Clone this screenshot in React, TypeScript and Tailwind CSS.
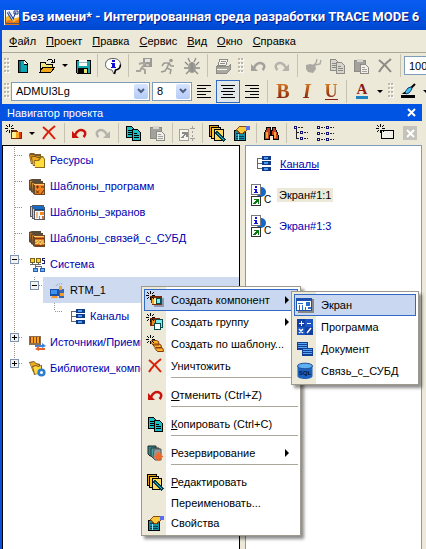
import type { ReactNode } from 'react';
import { clsx } from 'clsx';

interface IconProps {
  children: ReactNode;
  size?: number;
  smooth?: boolean;
}

function Icon({ children, size = 18, smooth }: IconProps) {
  return (
    <svg
      width={size}
      height={size}
      viewBox={`0 0 ${size} ${size}`}
      fill="none"
      shapeRendering={smooth ? 'auto' : 'crispEdges'}
      className="shrink-0"
      aria-hidden="true"
    >
      {children}
    </svg>
  );
}

function Spark() {
  return (
    <path
      d="M4 0h1v3H4zM4 6h1v3H4zM0 4h3v1H0zM6 4h3v1H6zM1 1h1v1H1zM2 2h1v1H2zM7 1h1v1H7zM6 2h1v1H6zM1 7h1v1H1zM2 6h1v1H2zM7 7h1v1H7zM6 6h1v1H6z"
      fill="#000"
    />
  );
}

const LogoIcon = () => (
  <Icon size={17} smooth>
    <path d="M1 1h15v15H1z" fill="#f4f6fb" />
    <path d="M2 9l4-3 3 4 7-2v8H2z" fill="#fbb52c" />
    <path d="M2 13l4-2 5 2 5-3v6H2z" fill="#e8751a" />
    <path d="M2.500 1v13.500H16" stroke="#4b5568" />
    <path d="M5 3l5 8" stroke="#2c4a9c" strokeWidth="3" />
    <path d="M5 3l5 8" stroke="#c9dcf8" />
    <path d="M10 10l3-7M11 2h4v3h-4z" stroke="#1c3a8c" />
  </Icon>
);

const NewIcon = () => (
  <Icon>
    <path d="M4 3h6l4 4v9H4z" fill="#000" />
    <path d="M5 4h5v4h3v7H5z" fill="#0fa5b0" />
    <path d="M5 4h2v11H5z" fill="#0b6b83" />
    <path d="M10 4v3h3z" fill="#fff" />
  </Icon>
);

const OpenIcon = () => (
  <Icon>
    <path d="M2 14V5h5l1 2h6v3" fill="#f6e27a" stroke="#000" />
    <path d="M2 15l3-5h12l-4 5z" fill="#f0a51c" stroke="#000" />
    <path d="M9 4c2-3 5-2 6 1M13 5h3V2" stroke="#000" />
  </Icon>
);

const SaveIcon = () => (
  <Icon>
    <path d="M3 3h14v13H4l-1-1z" fill="#12aab0" stroke="#000" />
    <path d="M6 3h8v6H6z" fill="#fff" />
    <path d="M6 5h8v1H6z" fill="#9ab8c0" />
    <path d="M5 11h10v5H5z" fill="#000" />
    <path d="M11 12h3v4h-3z" fill="#f0e070" />
  </Icon>
);

const InfoIcon = () => (
  <Icon smooth>
    <path d="M9 1.500c5 0 7.500 2.600 7.500 6 0 3-2 5-5 5.500L10 17l-2-4c-4-.5-6.500-2-6.500-5.500 0-3.400 2.500-6 7.500-6z" fill="#fff" stroke="#555" />
    <path d="M10.500 17l1-4c3-.5 5-2.500 5-5.500" stroke="#000" strokeWidth="1.500" />
    <path d="M8 3h3v2H8zM7 6h4v4h1v1H7v-1h1V7H7z" fill="#1010d0" />
  </Icon>
);

const RunSaveIcon = () => (
  <Icon>
    <path d="M8 1h9v9H8z" fill="#9c9a94" />
    <path d="M10 2h5v3h-5z" fill="#e6e4dc" />
    <path d="M11 7h3v2h-3z" fill="#c9c7be" />
    <path d="M4 7l3-1h3l-3 5 3 2v4M7 10l-2 4H1" stroke="#a8a69f" strokeWidth="2" shapeRendering="auto" />
  </Icon>
);

const RunIcon = () => (
  <Icon smooth>
    <circle cx="12" cy="3.500" r="1.800" fill="#9c9a94" />
    <path d="M5 6h5l-2 5 4 2-1 4M8 11l-2 3-4 1M10 6l2 3h3M5 6L3 9" stroke="#9c9a94" strokeWidth="1.500" />
  </Icon>
);

const BugIcon = () => (
  <Icon smooth>
    <ellipse cx="9" cy="10.500" rx="4" ry="5.500" fill="#9c9a94" />
    <path d="M9 5v10M5 8L2 5M13 8l3-3M5 11H1M13 11h4M6 14l-3 3M12 14l3 3M7 5L5 1M11 5l2-4" stroke="#8d8b85" strokeWidth="1.300" />
  </Icon>
);

const PrinterIcon = () => (
  <Icon>
    <path d="M6 2h8l-2 6H4z" fill="#f4f3ee" stroke="#8d8b85" />
    <path d="M7 4h5M6 6h5" stroke="#8d8b85" />
    <path d="M2 9h13l1-1v5l-3 3H2z" fill="#a9a7a0" stroke="#8d8b85" />
    <path d="M3 12h10" stroke="#f4f3ee" />
  </Icon>
);

const UndoIcon = ({ color = '#a3a19b' }: { color?: string }) => (
  <Icon smooth>
    <path d="M5 11c2-5 6-6 9-4 2 1.500 1.500 4-.5 6" stroke={color} strokeWidth="2.500" />
    <path d="M2 7v7h7z" fill={color} />
  </Icon>
);

const RedoIcon = () => (
  <Icon smooth>
    <path d="M13 11C11 6 7 5 4 7c-2 1.500-1.500 4 .5 6" stroke="#b4b2ab" strokeWidth="2.500" />
    <path d="M16 7v7H9z" fill="#b4b2ab" />
  </Icon>
);

const CutIcon = () => (
  <Icon smooth>
    <path d="M2 8l4-1 5 1 1 4-3 4-5-1-2-3z" fill="#aaa8a1" />
    <path d="M9 9l3-3 1-4M11 8l5-1 1-4" stroke="#aaa8a1" strokeWidth="1.300" />
  </Icon>
);

const CopyIcon = ({ active }: { active?: boolean }) => {
  const fill = active ? '#19bfc4' : '#d6d4cb';
  const line = active ? '#000' : '#8d8b85';
  return (
    <Icon>
      <path d="M2.500 2.500h5l3 3v8h-8z" fill={fill} stroke={line} />
      <path d="M4 6h4M4 8h4M4 10h4" stroke={line} />
      <path d="M8.500 5.500h5l3 3v8h-8z" fill={fill} stroke={line} />
      <path d="M10 9h3M10 11h5M10 13h5" stroke={line} />
    </Icon>
  );
};

const PasteIcon = () => (
  <Icon>
    <path d="M2.500 3.500h11v11h-11z" fill="#a3a19b" stroke="#8d8b85" />
    <path d="M5 2h6v3H5z" fill="#d6d4cb" />
    <path d="M8.500 7.500h5l3 3v6h-8z" fill="#f1efe7" stroke="#8d8b85" />
    <path d="M10 10h3M10 12h5M10 14h5" stroke="#a3a19b" />
  </Icon>
);

const CrossIcon = ({ color = '#8d8b85' }: { color?: string }) => (
  <Icon smooth>
    <path d="M3 3c4 3 8 7 12 12" stroke={color} strokeWidth="2" />
    <path d="M15 2C10 6 6 10 3 15" stroke={color} strokeWidth="2" />
  </Icon>
);

type AlignKind = 'left' | 'center' | 'right';

const alignPaths: Record<AlignKind, string> = {
  left: 'M2 3.500h14M2 6.500h9M2 9.500h14M2 12.500h9M2 15.500h14',
  center: 'M2 3.500h14M4 6.500h10M2 9.500h14M4 12.500h10M2 15.500h14',
  right: 'M2 3.500h14M7 6.500h9M2 9.500h14M7 12.500h9M2 15.500h14',
};

const AlignIcon = ({ kind }: { kind: AlignKind }) => (
  <Icon>
    <path d={alignPaths[kind]} stroke="#000" />
  </Icon>
);

const BrushIcon = () => (
  <Icon size={16} smooth>
    <path d="M15 1L8 8" stroke="#000" strokeWidth="2" />
    <path d="M11 4L8 5 5 9l1 2 3-1 3-4z" fill="#3cc0e8" stroke="#123a7a" />
    <path d="M5 9c-2 0-2 2-4 2h5z" fill="#000" />
    <path d="M1 12h14v3H1z" fill="#000" />
  </Icon>
);

const CreateIcon = () => (
  <Icon>
    <path d="M6 6h6l1 2h4v7H6z" fill="#7a2a08" />
    <path d="M7 8h9v6H7z" fill="#f7a822" />
    <path d="M7 8h4v6H7z" fill="#fff08c" />
    <path d="M14 8h2v6h-2z" fill="#e0341c" />
    <Spark />
  </Icon>
);

const ShortcutIcon = () => (
  <Icon>
    <path d="M1.500 5.500h9v11h-9z" fill="#f6f5f0" stroke="#a3a19b" />
    <path d="M4 14l4-5M4 8.500h4.500V13" stroke="#8d8b85" strokeWidth="2" />
    <path d="M14.500 2v3M14.500 7v2M14.500 11v2M14.500 15v2M12 4.500h5M12 14.500h5" stroke="#a3a19b" />
  </Icon>
);

const EditIcon = () => (
  <Icon>
    <path d="M1.500 1.500h9v11h-9z" fill="#e39a14" stroke="#000" />
    <path d="M3.500 3.500h9v11h-9z" fill="#f7c93c" stroke="#000" />
    <path d="M6.500 5.500h9v11h-9z" fill="#fbd75c" stroke="#000" />
    <path d="M8 8l9 9" stroke="#063f4c" strokeWidth="3" />
    <path d="M9 9l7 7" stroke="#25c4d4" />
  </Icon>
);

const PropsIcon = () => (
  <Icon>
    <path d="M2.500 6.500h11v10h-11z" fill="#148fa6" stroke="#000" />
    <path d="M4 9.500h8M4 12.500h8M4 14.500h8" stroke="#053b55" />
    <path d="M6.500 10v6" stroke="#8be4ee" />
    <path d="M4 6l4-4h6v5l-3 2H8z" fill="#f7c93c" stroke="#8b4b0d" />
    <path d="M14 2h4v4h-4z" fill="#5a6cf0" />
  </Icon>
);

const FindIcon = () => (
  <Icon>
    <path d="M5 3h3v3h2V3h3l3 8v4h-5v-4H7v4H2v-4z" fill="#c8411a" stroke="#000" />
    <path d="M4 8h2v6H4zM12 8h2v6h-2z" fill="#f7a23a" />
    <path d="M8 6h2v5H8z" fill="#000" />
  </Icon>
);

const TreeViewIcon = () => (
  <Icon>
    <path d="M4.500 5v10M5 8.500h2M5 14.500h2" stroke="#222" />
    <path d="M2.500 2.500h2v2h-2zM8.500 7.500h2v2h-2zM8.500 13.500h2v2h-2z" fill="#fff" stroke="#10107a" />
    <path d="M6 3.500h5M12 8.500h4M12 14.500h4" stroke="#222" strokeDasharray="2 1" />
  </Icon>
);

const ListViewIcon = () => (
  <Icon>
    <path
      d="M1.500 2.500h2v2h-2zM1.500 8.500h2v2h-2zM1.500 14.500h2v2h-2zM10.500 2.500h2v2h-2zM10.500 8.500h2v2h-2zM10.500 14.500h2v2h-2z"
      fill="#fff"
      stroke="#10107a"
    />
    <path d="M5 3.500h4M5 9.500h4M5 15.500h4M14 3.500h4M14 9.500h4M14 15.500h4" stroke="#222" strokeDasharray="2 1" />
  </Icon>
);

const NewWindowIcon = () => (
  <Icon>
    <path d="M5.500 6.500h12v8h-12z" fill="#f1efe7" stroke="#000" />
    <Spark />
  </Icon>
);

const FoldersIcon = () => (
  <Icon size={17} smooth>
    <path d="M0 3l1-2h4l1 1h6v10H2z" fill="#7a5a28" />
    <path d="M1 3h4l1 1h5v7H2z" fill="#d98a10" />
    <path d="M2 5l1-1h4l1 1h6v9H4z" fill="#7a5a28" />
    <path d="M3 5h4l1 1h5v7H4z" fill="#f0a81e" />
    <path d="M5 8h4l3-4h2l2 3v9H6z" fill="#8a6a20" />
    <path d="M6 9h4l3-4 2 2v8H6z" fill="#ffdc3a" />
  </Icon>
);

const StackBase = ({ side, front }: { side: string; front: string }) => (
  <>
    <path d="M0 2l3-1h9v12H2l-2-1z" fill="#5a4a38" />
    <path d="M1 3h10v8H2z" fill={side} />
    <path d="M2 4l2-1h10v12H4l-2-1z" fill="#5a4a38" />
    <path d="M3 5h10v9H4z" fill={side} />
    <path d="M4 6l2-1h10v12H6l-2-1z" fill="#6a4a28" />
    <path d="M6 7h9v9H6z" fill={front} />
    <path d="M5 6h10v1H5z" fill="#ffc870" />
  </>
);

const ProgramsIcon = () => (
  <Icon size={17} smooth>
    <StackBase side="#e5982c" front="#f58220" />
    <path d="M7 9h3M8.500 7.500v3M12 9h3M7 12.500l3 3M10 12.500l-3 3M15 12l-3 4" stroke="#5c2a08" />
  </Icon>
);

const ScreensIcon = () => (
  <Icon size={17}>
    <path d="M1 2h2V1h12v2h1v13H5v-1H3v-2H1z" fill="#55585e" />
    <path d="M2 3h1v9H2zM4 5h1v9H4z" fill="#c9ccd2" />
    <path d="M3 2h12v3H4V3H3z" fill="#1a6cc0" />
    <path d="M6 7h9v8H6z" fill="#f4f6f9" />
    <path d="M6 5h10v1H6z" fill="#0d4788" />
    <path d="M7 8h2v6H7z" fill="#e8b68c" />
    <path d="M11 8h4v3h-4z" fill="#f08a1e" />
    <path d="M10 12h1v3h-1zM13 12h2v3h-2z" fill="#c97a40" />
  </Icon>
);

const DatabaseStackIcon = () => (
  <Icon size={17} smooth>
    <StackBase side="#cf7a24" front="#d8701c" />
    <path d="M6 8.500h9M6 15.500h9" stroke="#8a3a08" />
    <text x="6" y="14" className="font-bold text-[5px]" fill="#fff27a">SQL</text>
  </Icon>
);

const SystemIcon = () => (
  <Icon size={17}>
    <path d="M1 2h5v5H1zM7 2h5v5H7z" fill="#7a6420" />
    <path d="M2 3h3v3H2zM8 3h3v3H8z" fill="#ffd622" />
    <path d="M3.500 7v2M9.500 7v2M1 8.500h11M6.500 9v3M12.500 10v2M6 10.500h7" stroke="#6a6a6a" />
    <path d="M4 12h5v4H4zM11 12h5v4h-5z" fill="#2c5ca8" />
    <path d="M5 13h3v2H5zM12 13h3v2h-3z" fill="#6ab4fa" />
    <path d="M16 2.500h-2.500v2h2v3H13" stroke="#1a1a70" />
  </Icon>
);

const NodeIcon = () => (
  <Icon size={17} smooth>
    <path d="M1 7h9v7H1z" fill="#1a50a8" />
    <path d="M2 8h6v4H2z" fill="#3f92f0" />
    <path d="M2 16h7l-1-2H3z" fill="#f29a2c" />
    <path d="M10 7h5v9h-5z" fill="#3763b4" />
    <path d="M10 4h3v4h-3z" fill="#e2a43c" />
    <path d="M11 11h4v3h-4z" fill="#f29a2c" />
    <path d="M7 4c1-3 4-1 7-3" stroke="#999" strokeDasharray="1 1" />
  </Icon>
);

const ChannelsIcon = () => (
  <Icon size={17}>
    <path d="M7 3.500H2.500v10H7M3 8.500h4" stroke="#666" />
    <path d="M7 1h9v4H7zM7 6h9v4H7zM7 12h9v4H7z" fill="#123a84" />
    <path d="M9 2h4v2H9zM9 7h4v2H9zM9 13h4v2H9z" fill="#4a9cf5" />
  </Icon>
);

const SourcesIcon = () => (
  <Icon size={17} smooth>
    <path d="M0 2h12v9H0z" fill="#8a7050" />
    <path d="M1 3h10v6H1z" fill="#8a3c0c" />
    <path d="M3 3v6M6 3v6M9 3v6" stroke="#f7a11e" strokeWidth="2" />
    <path d="M6 11h7V9l4 3-4 2v-1H6z" fill="#3a82e0" />
    <path d="M16 14h-6v-2l-4 3 4 2v-1h6z" fill="#e8642c" />
  </Icon>
);

const LibrariesIcon = () => (
  <Icon size={17} smooth>
    <path d="M0 2l5-1 2 2 4 1v6l-7 2z" fill="#7a5a28" />
    <path d="M1 3l4-1 2 2 3 1v5l-6 1z" fill="#f0ac1e" />
    <path d="M3 6l4-1 2 1 4-1v8l-8 2z" fill="#7a5a28" />
    <path d="M4 7l3-1 2 1 3-1v7l-6 1z" fill="#ffd93a" />
    <circle cx="12.500" cy="12.500" r="2.800" fill="#fff" stroke="#2c7cd0" strokeWidth="2.600" />
  </Icon>
);

const CallIcon = () => (
  <svg width="22" height="24" viewBox="0 0 22 24" fill="none" shapeRendering="crispEdges" className="shrink-0" aria-hidden="true">
    <circle cx="11" cy="9" r="5" fill="#1666c8" shapeRendering="auto" />
    <path d="M1.500 1.500h9v10h-9z" fill="#fff" stroke="#777" />
    <path d="M5 3h2v2H5zM4 6h3v3h1v1H4V9h1V7H4z" fill="#1010d8" />
    <path d="M1.500 13.500h9v9h-9z" fill="#fff" stroke="#333" />
    <path d="M4 16h5v5H8v-2H7v1H6v1H3v-1h1v-1h1v-1h1v-1H4z" fill="#087a12" />
    <text x="14" y="20" className="text-[10px]" fill="#000">C</text>
  </svg>
);

const CreateComponentIcon = () => (
  <Icon>
    <path d="M8 7h10v9H8z" fill="#8c98b0" />
    <path d="M4 5h12v9H6z" fill="#7a2a08" />
    <path d="M6 7h5v6H6z" fill="#f7a822" />
    <path d="M8 7h2v6H8z" fill="#fff0a8" />
    <path d="M10.500 7.500h4v5h-4z" fill="#7cecea" stroke="#064b50" />
    <Spark />
  </Icon>
);

const CreateGroupIcon = () => (
  <Icon>
    <path d="M4 5h10v8H4z" fill="#7a2a08" />
    <path d="M6 7h7v5H6z" fill="#f08a1c" />
    <path d="M9.500 6.500h7v8h-7z" fill="#7cecea" stroke="#064b50" />
    <path d="M8.500 10.500h6v6h-6z" fill="#fff" stroke="#064b50" />
    <Spark />
  </Icon>
);

const CreateFromTemplateIcon = () => (
  <Icon smooth>
    <path
      d="M4.500 6.500l1-1h5l2 1 .5 3.500h-6zM7 10l1-1h5l2 1 .5 3h-6zM9 13.500l1-1h5l2 1 .5 3h-6z"
      fill="#fbb42c"
      stroke="#8a3a0c"
    />
    <Spark />
  </Icon>
);

const ReserveIcon = () => (
  <Icon smooth>
    <path d="M2 2h8v10H4l-2-2z" fill="#2c8a90" stroke="#222" />
    <path d="M5 4h8v10H7l-2-2z" fill="#4aa0a4" stroke="#333" />
    <path d="M8 5h7v11H9l-2-2z" fill="#8f9b9c" stroke="#555" />
    <path d="M12.500 8v9M8 12.500h9M9.500 9.500l6 6M15.500 9.500l-6 6" stroke="#f0682a" strokeWidth="1.500" />
  </Icon>
);

const ScreenIcon = () => (
  <Icon>
    <path d="M2 3h16v14H2z" fill="#888" />
    <path d="M0 2h16v13H0z" fill="#1c4fae" />
    <path d="M1 5h14v9H1z" fill="#fff" />
    <path d="M2 7h5v1H2zM3 9h1v5H3zM6 9h1v5H6zM10 6h4v4h-4zM9 11h1v3H9zM12 11h3v2h-3z" fill="#2b6bd0" />
  </Icon>
);

const ProgramIcon = () => (
  <Icon>
    <path d="M1 1h16v16H1z" fill="#123fa4" />
    <path d="M9 1h8v8H9zM1 9h8v8H1z" fill="#1a55c4" />
    <path d="M3 5.500h5M5.500 3v5M11 5.500h4" stroke="#fff" />
    <path d="M3 11l4 4M7 11l-4 4M15 10l-4 5" stroke="#fff" strokeWidth="1.500" shapeRendering="auto" />
  </Icon>
);

const DocumentIcon = () => (
  <Icon>
    <path d="M1 2h11v8H1zM6 8h11v8H6z" fill="#123f94" />
    <path d="M2 3h9v1H2zM2 5h9v1H2zM2 7h9v1H2zM7 9h9v1H7zM7 11h9v1H7zM7 13h9v1H7z" fill="#5aa6f4" />
  </Icon>
);

const DatabaseIcon = () => (
  <Icon smooth>
    <path d="M1.500 4v10c0 4 15 4 15 0V4z" fill="#1d62bc" />
    <ellipse cx="9" cy="4" rx="7.500" ry="2.800" fill="#61aef2" stroke="#1d4f9a" />
    <text x="3" y="13" className="font-bold text-[6px]" fill="#06122e">SQL</text>
  </Icon>
);

function Tool({ label, active, children }: { label: string; active?: boolean; children: ReactNode }) {
  return (
    <button
      type="button"
      aria-label={label}
      className={clsx(
        'flex h-[23px] w-6 shrink-0 items-center justify-center',
        active && 'border border-[#316ac5] bg-[#e1e6e8]',
      )}
    >
      {children}
    </button>
  );
}

function Arrow({ label }: { label: string }) {
  return (
    <button type="button" aria-label={label} className="flex h-6 w-[11px] shrink-0 items-center justify-center">
      <span className="border-x-[3px] border-t-[3px] border-x-transparent border-t-black" />
    </button>
  );
}

const Divider = () => (
  <div className="flex h-[23px] w-[7px] shrink-0 justify-center">
    <div className="w-px bg-[#c5c2b2]" />
  </div>
);

const NavDivider = () => (
  <div className="flex h-5 w-[6px] shrink-0 justify-center">
    <div className="w-px bg-[#c5c2b2]" />
  </div>
);

function Grip({ wide }: { wide?: boolean }) {
  return (
    <div className={clsx('flex shrink-0 justify-center', wide ? 'w-[11px]' : 'w-2')}>
      <svg width="6" height="18" viewBox="0 0 6 18" fill="none" shapeRendering="crispEdges" aria-hidden="true">
        <path d="M2 2v16M5 2v16" stroke="#fff" strokeWidth="2" strokeDasharray="2 2" />
        <path d="M1 1v16M4 1v16" stroke="#bbb8aa" strokeWidth="2" strokeDasharray="2 2" />
      </svg>
    </div>
  );
}

function Combo({ label, value, className }: { label: string; value: string; className: string }) {
  return (
    <div className={clsx('relative h-[19px] shrink-0', className)}>
      <select
        aria-label={label}
        className="h-full w-full appearance-none border border-[#7f9db9] bg-white pl-1 text-[11px] leading-4 outline-none"
      >
        <option>{value}</option>
      </select>
      <span className="pointer-events-none absolute inset-y-[2px] right-[2px] flex w-[14px] items-center justify-center rounded-xs bg-linear-to-b from-[#d7e4fd] to-[#b4cbf7]">
        <svg width="8" height="6" viewBox="0 0 8 6" fill="none" aria-hidden="true">
          <path d="M1 1l3 3 3-3" stroke="#4d6185" strokeWidth="2" />
        </svg>
      </span>
    </div>
  );
}

const menuItems = [
  ['Ф', 'айл'],
  ['П', 'роект'],
  ['П', 'равка'],
  ['С', 'ервис'],
  ['В', 'ид'],
  ['О', 'кно'],
  ['С', 'правка'],
];

type GuideKind = 'branch' | 'plus' | 'minus' | 'line' | 'end' | 'minusEnd' | 'plusEnd' | 'blank';

function Guide({ kind }: { kind: GuideKind }) {
  const box = kind.startsWith('plus') || kind.startsWith('minus');
  const ends = kind === 'end' || kind.endsWith('End');
  return (
    <svg width="20" height="26" viewBox="0 0 20 26" fill="none" shapeRendering="crispEdges" className="shrink-0" aria-hidden="true">
      {kind !== 'blank' && (
        <path d={ends ? 'M11.500 0v8' : 'M11.500 0v26'} stroke="#9a978a" strokeDasharray="1 1" />
      )}
      {kind !== 'line' && kind !== 'blank' && <path d="M12 8.500h8" stroke="#9a978a" strokeDasharray="1 1" />}
      {box && (
        <>
          <path d="M7.500 4.500h8v8h-8z" fill="#f3f2ec" stroke="#7f93b0" />
          <path d={kind.startsWith('plus') ? 'M9 8.500h5M11.500 6v5' : 'M9 8.500h5'} stroke="#000" />
        </>
      )}
    </svg>
  );
}

interface TreeNode {
  label: string;
  icon: ReactNode;
  guides: GuideKind[];
  selected?: boolean;
}

const treeNodes: TreeNode[] = [
  { label: 'Ресурсы', icon: <FoldersIcon />, guides: ['branch'] },
  { label: 'Шаблоны_программ', icon: <ProgramsIcon />, guides: ['branch'] },
  { label: 'Шаблоны_экранов', icon: <ScreensIcon />, guides: ['branch'] },
  { label: 'Шаблоны_связей_с_СУБД', icon: <DatabaseStackIcon />, guides: ['branch'] },
  { label: 'Система', icon: <SystemIcon />, guides: ['minus'] },
  { label: 'RTM_1', icon: <NodeIcon />, guides: ['line', 'minusEnd'], selected: true },
  { label: 'Каналы', icon: <ChannelsIcon />, guides: ['line', 'blank', 'end'] },
  { label: 'Источники/Приемники', icon: <SourcesIcon />, guides: ['plus'] },
  { label: 'Библиотеки_компонентов', icon: <LibrariesIcon />, guides: ['plusEnd'] },
];

function TreeRow({ node }: { node: TreeNode }) {
  return (
    <li className="flex h-[26px]">
      {node.guides.map((kind, i) => (
        <Guide key={i} kind={kind} />
      ))}
      <div
        className={clsx(
          'flex min-w-0 flex-1 items-center gap-1 pl-1.5 whitespace-nowrap',
          node.selected ? 'bg-[#cddaf0] text-black' : 'text-[#0000b0]',
        )}
      >
        {node.icon}
        <span>{node.label}</span>
      </div>
    </li>
  );
}

interface MenuEntry {
  label: string;
  mnemonic?: string;
  icon?: ReactNode;
  submenu?: boolean;
  active?: boolean;
  short?: boolean;
}

const contextGroups: MenuEntry[][] = [
  [
    { label: 'Создать компонент', icon: <CreateComponentIcon />, submenu: true, active: true },
    { label: 'Создать группу', icon: <CreateGroupIcon />, submenu: true },
    { label: 'Создать по шаблону...', icon: <CreateFromTemplateIcon /> },
    { label: 'Уничтожить', icon: <CrossIcon color="#d8200c" /> },
  ],
  [{ mnemonic: 'О', label: 'тменить (Ctrl+Z)', icon: <UndoIcon color="#c8140c" /> }],
  [{ mnemonic: 'К', label: 'опировать (Ctrl+C)', icon: <CopyIcon active /> }],
  [{ label: 'Резервирование', icon: <ReserveIcon />, submenu: true }],
  [
    { mnemonic: 'Р', label: 'едактировать', icon: <EditIcon /> },
    { label: 'Переименовать...', short: true },
    { label: 'Свойства', icon: <PropsIcon />, short: true },
  ],
];

const componentEntries: MenuEntry[] = [
  { label: 'Экран', icon: <ScreenIcon />, active: true },
  { label: 'Программа', icon: <ProgramIcon /> },
  { label: 'Документ', icon: <DocumentIcon /> },
  { label: 'Связь_с_СУБД', icon: <DatabaseIcon /> },
];

function MenuRow({ entry }: { entry: MenuEntry }) {
  return (
    <button
      type="button"
      role="menuitem"
      className={clsx(
        'flex w-full items-center border pr-2 pl-px text-left whitespace-nowrap',
        entry.short ? 'h-5' : 'h-[22px]',
        entry.active ? 'border-[#316ac5] bg-[#c9d8f0]' : 'border-transparent',
      )}
    >
      <span className="flex w-[25px] shrink-0 items-center">{entry.icon}</span>
      <span className="flex-1">
        {entry.mnemonic && <u>{entry.mnemonic}</u>}
        {entry.label}
      </span>
      {entry.submenu && <span className="border-y-4 border-l-4 border-y-transparent border-l-black" />}
    </button>
  );
}

const popupClass =
  'absolute border border-[#9d9a8c] bg-[linear-gradient(to_right,#ece9d8_24px,#fff_24px)] p-[2px] text-black shadow-[3px_3px_3px_rgba(0,0,0,0.45)]';

export default function App() {
  return (
    <div className="relative flex h-screen w-full flex-col overflow-hidden bg-[#ece9d8] font-['Liberation_Sans',Arial,sans-serif] text-[11px] leading-[14px] text-black">
      <header className="flex h-[30px] shrink-0 items-center gap-[2px] bg-linear-to-b from-[#0a5cf0] via-[#0055e5] to-[#0048d0] pt-1 pl-[3px] whitespace-nowrap">
        <LogoIcon />
        <h1 className="font-['Roboto',sans-serif] text-[13px] leading-4 font-bold text-white [text-shadow:1px_1px_#0a1883]">
          Без имени* - Интегрированная среда разработки TRACE MODE 6
        </h1>
      </header>

      <div className="flex min-h-0 flex-1 flex-col border-l-2 border-[#0a4fe0]">
        <nav className="flex h-[23px] shrink-0 items-center gap-[10px] border-b border-[#aca899] pl-[7px]">
          {menuItems.map(([mnemonic, rest]) => (
            <button key={mnemonic + rest} type="button">
              <u>{mnemonic}</u>
              {rest}
            </button>
          ))}
        </nav>

        <div role="toolbar" aria-label="Стандартная" className="flex h-[25px] shrink-0 items-center pl-px">
          <Grip />
          <Tool label="Создать"><NewIcon /></Tool>
          <Tool label="Открыть"><OpenIcon /></Tool>
          <Arrow label="Последние файлы" />
          <Tool label="Сохранить"><SaveIcon /></Tool>
          <Divider />
          <Tool label="Информация"><InfoIcon /></Tool>
          <Divider />
          <Tool label="Сохранить для МРВ"><RunSaveIcon /></Tool>
          <Tool label="Запустить"><RunIcon /></Tool>
          <Tool label="Отладка"><BugIcon /></Tool>
          <Divider />
          <Tool label="Печать"><PrinterIcon /></Tool>
          <Grip wide />
          <Tool label="Отменить"><UndoIcon /></Tool>
          <Tool label="Повторить"><RedoIcon /></Tool>
          <Divider />
          <Tool label="Вырезать"><CutIcon /></Tool>
          <Tool label="Копировать"><CopyIcon /></Tool>
          <Tool label="Вставить"><PasteIcon /></Tool>
          <Tool label="Удалить"><CrossIcon /></Tool>
          <Divider />
          <input
            aria-label="Масштаб"
            defaultValue="100%"
            className="h-[19px] w-14 shrink-0 border border-[#7f9db9] bg-white pl-1 text-[11px] outline-none"
          />
        </div>

        <div role="toolbar" aria-label="Форматирование" className="flex h-[26px] shrink-0 items-center pl-px">
          <Grip />
          <Combo label="Шрифт" value="ADMUI3Lg" className="mr-[2px] w-[139px]" />
          <Combo label="Размер" value="8" className="w-10" />
          <Tool label="По левому краю"><AlignIcon kind="left" /></Tool>
          <Tool label="По центру" active><AlignIcon kind="center" /></Tool>
          <Tool label="По правому краю"><AlignIcon kind="right" /></Tool>
          <Divider />
          <Tool label="Полужирный">
            <span className="bg-linear-to-b from-[#e08020] to-[#7c1408] bg-clip-text font-['Liberation_Serif',serif] text-[20px] leading-5 font-bold text-transparent">B</span>
          </Tool>
          <Tool label="Курсив">
            <span className="bg-linear-to-b from-[#e08020] to-[#7c1408] bg-clip-text px-px font-['Liberation_Serif',serif] text-[20px] leading-5 font-bold text-transparent italic">I</span>
          </Tool>
          <Tool label="Подчёркнутый">
            <span className="border-b border-[#8c1c10]">
              <span className="block bg-linear-to-b from-[#e08020] to-[#7c1408] bg-clip-text font-['Liberation_Serif',serif] text-[18px] leading-4 font-bold text-transparent">U</span>
            </span>
          </Tool>
          <Divider />
          <Tool label="Цвет текста">
            <span className="border-b-[3px] border-[#1c84c0] px-px font-['Liberation_Serif',serif] text-[15px] leading-[13px] font-bold text-[#8c1c10]">A</span>
          </Tool>
          <Arrow label="Выбор цвета текста" />
          <Grip wide />
          <Tool label="Цвет линии"><BrushIcon /></Tool>
          <Arrow label="Выбор цвета линии" />
        </div>

        <div className="mr-1 flex h-[17px] shrink-0 items-center justify-between bg-[#0054e3] pr-[6px] pl-[5px] text-white">
          <h2>Навигатор проекта</h2>
          <button type="button" aria-label="Закрыть">
            <svg width="9" height="9" viewBox="0 0 9 9" fill="none" aria-hidden="true">
              <path d="M1 1l7 7M8 1L1 8" stroke="#fff" strokeWidth="2" />
            </svg>
          </button>
        </div>

        <div role="toolbar" aria-label="Навигатор" className="mr-1 flex h-6 shrink-0 items-center">
          <Tool label="Создать компонент"><CreateIcon /></Tool>
          <Arrow label="Варианты создания" />
          <Tool label="Уничтожить"><CrossIcon color="#d8200c" /></Tool>
          <NavDivider />
          <Tool label="Отменить"><UndoIcon color="#c8140c" /></Tool>
          <Tool label="Повторить"><RedoIcon /></Tool>
          <NavDivider />
          <Tool label="Копировать"><CopyIcon active /></Tool>
          <Tool label="Вставить"><PasteIcon /></Tool>
          <NavDivider />
          <Tool label="Ярлык"><ShortcutIcon /></Tool>
          <NavDivider />
          <Tool label="Редактировать"><EditIcon /></Tool>
          <Tool label="Свойства"><PropsIcon /></Tool>
          <NavDivider />
          <Tool label="Найти"><FindIcon /></Tool>
          <NavDivider />
          <Tool label="Дерево"><TreeViewIcon /></Tool>
          <Tool label="Список"><ListViewIcon /></Tool>
          <div className="flex-1" />
          <Tool label="Новое окно"><NewWindowIcon /></Tool>
          <button type="button" aria-label="Закрыть окно" className="mr-[5px] ml-[6px] flex h-[14px] w-[14px] shrink-0 items-center justify-center bg-[#c4c2ba]">
            <svg width="9" height="9" viewBox="0 0 9 9" fill="none" aria-hidden="true">
              <path d="M1 1l7 7M8 1L1 8" stroke="#fff" strokeWidth="2" />
            </svg>
          </button>
        </div>

        <main className="mr-1 grid min-h-0 flex-1 grid-cols-[238fr_177fr] gap-[5px]">
          <ul className="min-w-0 overflow-hidden border-x border-t border-black bg-white pt-px">
            {treeNodes.map((node) => (
              <TreeRow key={node.label} node={node} />
            ))}
          </ul>
          <section className="flex min-w-0 flex-col items-start border-x border-t border-[#7f9db9] bg-white pt-[9px] pl-1">
            <a href="#channels" className="mb-[11px] flex items-center gap-2 pl-[5px] text-[#0000b0] underline">
              <ChannelsIcon />
              <span>Каналы</span>
            </a>
            <a href="#screen-1" className="mb-[7px] flex items-center gap-[5px]">
              <CallIcon />
              <span className="bg-[#ece9d8] px-[2px]">Экран#1:1</span>
            </a>
            <a href="#screen-3" className="flex items-center gap-[5px] text-[#0000b0]">
              <CallIcon />
              <span className="px-[2px]">Экран#1:3</span>
            </a>
          </section>
        </main>
      </div>

      <div role="menu" aria-label="Узел" className={clsx(popupClass, 'top-[286px] left-[141px] w-[160px]')}>
        {contextGroups.map((group, i) => (
          <div key={i}>
            {i > 0 && <div className="ml-[27px] h-[7px] border-t border-[#aca899]" />}
            {group.map((entry) => (
              <MenuRow key={entry.label} entry={entry} />
            ))}
          </div>
        ))}
      </div>

      <div role="menu" aria-label="Создать компонент" className={clsx(popupClass, 'top-[291px] left-[291px] w-[128px]')}>
        {componentEntries.map((entry) => (
          <MenuRow key={entry.label} entry={entry} />
        ))}
      </div>
    </div>
  );
}
